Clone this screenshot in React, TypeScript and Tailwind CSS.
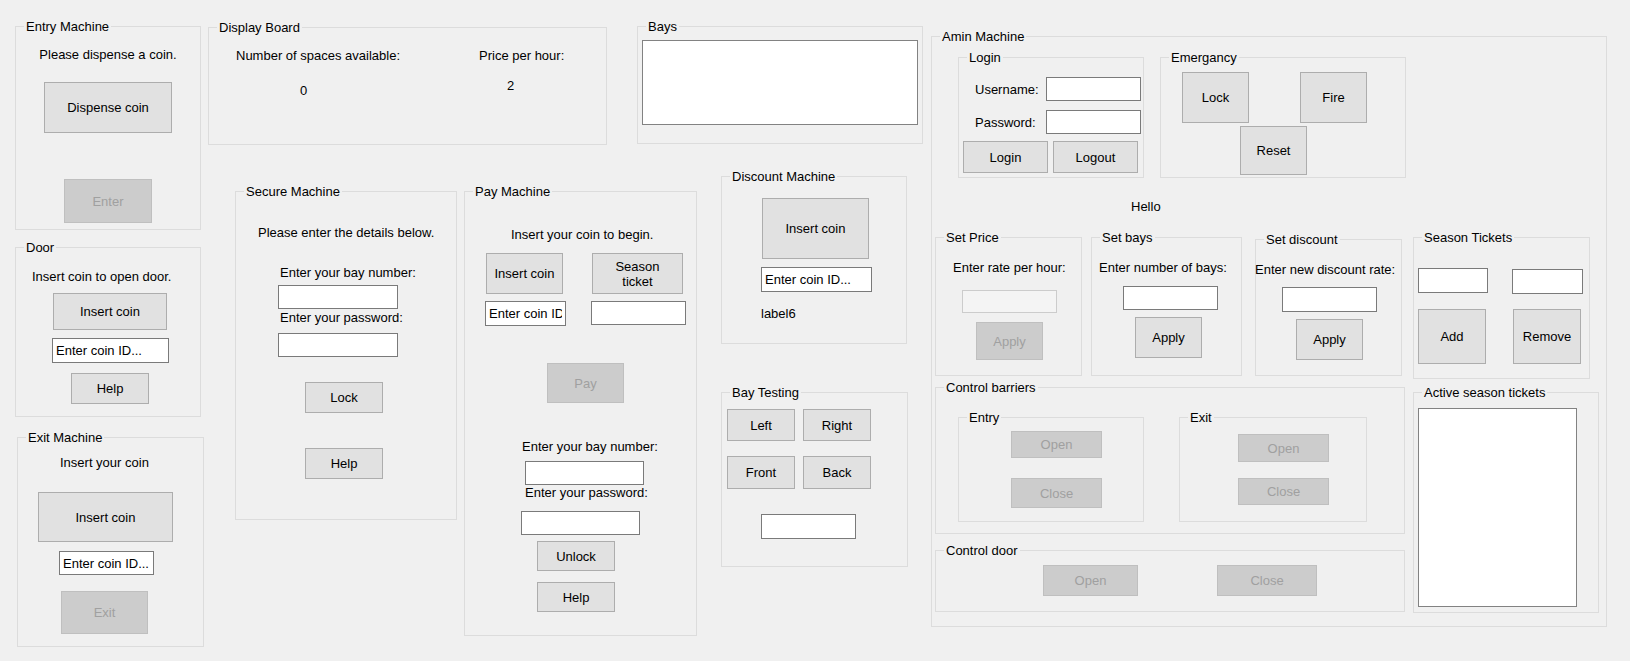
import React from 'react'

type BoxProps = {
  title: string
  className?: string
  children?: React.ReactNode
}

// WinForms-like group box: thin light border with the caption sitting on the top edge
const Group = ({ title, className = '', children }: BoxProps) => (
  <div className={`relative shrink-0 border border-[#dcdcdc] flex flex-col items-start ${className}`}>
    <span className="absolute -top-[8px] left-[8px] px-[2px] bg-[#f0f0f0] whitespace-nowrap leading-[15px]">{title}</span>
    {children}
  </div>
)

const Btn = ({ children, className = '', disabled = false }: { children: React.ReactNode; className?: string; disabled?: boolean }) => (
  <button
    type="button"
    className={`shrink-0 flex items-center justify-center text-center leading-[15px] border ${
      disabled ? 'border-[#bfbfbf] bg-[#cccccc] text-[#a0a0a0]' : 'border-[#adadad] bg-[#e1e1e1] text-black'
    } ${className}`}
  >
    {children}
  </button>
)

const Field = ({ className = '', value = '', disabled = false }: { className?: string; value?: string; disabled?: boolean }) => (
  <input
    readOnly
    value={value}
    className={`shrink-0 block px-[3px] text-black outline-none border ${
      disabled ? 'border-[#cccccc] bg-[#f4f4f4]' : 'border-[#7a7a7a] bg-white'
    } ${className}`}
  />
)

const Label = ({ children, className = '' }: { children: React.ReactNode; className?: string }) => (
  <div className={`shrink-0 whitespace-nowrap leading-[15px] ${className}`}>{children}</div>
)

const ListBox = ({ className = '' }: { className?: string }) => (
  <div className={`shrink-0 bg-white border border-[#828282] ${className}`} />
)

export default function App() {
  return (
    <div className="w-[1630px] h-[661px] overflow-hidden bg-[#f0f0f0] flex items-start text-[13px] leading-[15px] text-black font-['Liberation_Sans',Arial,sans-serif]">
      {/* Left column */}
      <div className="w-[208px] shrink-0 pl-[15px] flex flex-col items-start">
        <Group title="Entry Machine" className="w-[186px] h-[204px] mt-[26px]">
          <Label className="mt-[20px] self-center">Please dispense a coin.</Label>
          <Btn className="mt-[20px] self-center w-[128px] h-[51px]">Dispense coin</Btn>
          <Btn disabled className="mt-[46px] self-center w-[88px] h-[44px]">Enter</Btn>
        </Group>

        <Group title="Door" className="w-[186px] h-[170px] mt-[17px]">
          <Label className="mt-[21px] ml-[16px]">Insert coin to open door.</Label>
          <Btn className="mt-[9px] ml-[37px] w-[114px] h-[37px]">Insert coin</Btn>
          <Field value="Enter coin ID..." className="mt-[8px] ml-[36px] w-[117px] h-[25px]" />
          <Btn className="mt-[10px] ml-[55px] w-[78px] h-[31px]">Help</Btn>
        </Group>

        <Group title="Exit Machine" className="w-[187px] h-[210px] mt-[20px] ml-[2px]">
          <Label className="mt-[17px] ml-[42px]">Insert your coin</Label>
          <Btn className="mt-[22px] ml-[20px] w-[135px] h-[50px]">Insert coin</Btn>
          <Field value="Enter coin ID..." className="mt-[9px] ml-[41px] w-[95px] h-[24px]" />
          <Btn disabled className="mt-[16px] ml-[43px] w-[87px] h-[43px]">Exit</Btn>
        </Group>
      </div>

      {/* Middle area */}
      <div className="shrink-0 flex flex-col">
        <div className="flex items-start">
          <Group title="Display Board" className="w-[399px] h-[118px] mt-[27px]">
            <div className="flex items-start mt-[20px] ml-[27px]">
              <div className="w-[243px] flex flex-col items-start">
                <Label>Number of spaces available:</Label>
                <Label className="mt-[20px] ml-[64px]">0</Label>
              </div>
              <div className="flex flex-col items-start">
                <Label>Price per hour:</Label>
                <Label className="mt-[15px] ml-[28px]">2</Label>
              </div>
            </div>
          </Group>

          <Group title="Bays" className="w-[286px] h-[118px] mt-[26px] ml-[30px]">
            <ListBox className="mt-[13px] ml-[4px] w-[276px] h-[85px]" />
          </Group>
        </div>

        <div className="flex items-start">
          <Group title="Secure Machine" className="w-[222px] h-[329px] mt-[46px] ml-[27px]">
            <Label className="mt-[33px] ml-[22px]">Please enter the details below.</Label>
            <Label className="mt-[25px] ml-[44px]">Enter your bay number:</Label>
            <Field className="mt-[5px] ml-[42px] w-[120px] h-[24px]" />
            <Label className="mt-[1px] ml-[44px]">Enter your password:</Label>
            <Field className="mt-[8px] ml-[42px] w-[120px] h-[24px]" />
            <Btn className="mt-[25px] ml-[69px] w-[78px] h-[31px]">Lock</Btn>
            <Btn className="mt-[35px] ml-[69px] w-[78px] h-[31px]">Help</Btn>
          </Group>

          <Group title="Pay Machine" className="w-[233px] h-[445px] mt-[46px] ml-[7px]">
            <Label className="mt-[35px] ml-[46px]">Insert your coin to begin.</Label>
            <div className="flex items-start mt-[11px] ml-[21px] gap-[29px]">
              <Btn className="w-[77px] h-[41px]">Insert coin</Btn>
              <Btn className="w-[91px] h-[41px]">Season<br />ticket</Btn>
            </div>
            <div className="flex items-start mt-[7px] ml-[20px] gap-[25px]">
              <Field value="Enter coin ID..." className="w-[81px] h-[25px]" />
              <Field className="w-[95px] h-[24px]" />
            </div>
            <Btn disabled className="mt-[37px] ml-[82px] w-[77px] h-[40px]">Pay</Btn>
            <Label className="mt-[36px] ml-[57px]">Enter your bay number:</Label>
            <Field className="mt-[7px] ml-[60px] w-[119px] h-[24px]" />
            <Label className="ml-[60px]">Enter your password:</Label>
            <Field className="mt-[11px] ml-[56px] w-[119px] h-[24px]" />
            <Btn className="mt-[6px] ml-[72px] w-[78px] h-[30px]">Unlock</Btn>
            <Btn className="mt-[11px] ml-[72px] w-[78px] h-[30px]">Help</Btn>
          </Group>

          <div className="flex flex-col items-start ml-[24px] mt-[31px]">
            <Group title="Discount Machine" className="w-[186px] h-[168px]">
              <Btn className="mt-[21px] ml-[40px] w-[107px] h-[61px]">Insert coin</Btn>
              <Field value="Enter coin ID..." className="mt-[8px] ml-[39px] w-[111px] h-[25px]" />
              <Label className="mt-[14px] ml-[39px]">label6</Label>
            </Group>

            <Group title="Bay Testing" className="w-[187px] h-[175px] mt-[48px]">
              <div className="flex mt-[16px] ml-[5px] gap-[8px]">
                <Btn className="w-[68px] h-[32px]">Left</Btn>
                <Btn className="w-[68px] h-[32px]">Right</Btn>
              </div>
              <div className="flex mt-[15px] ml-[5px] gap-[8px]">
                <Btn className="w-[68px] h-[33px]">Front</Btn>
                <Btn className="w-[68px] h-[33px]">Back</Btn>
              </div>
              <Field className="mt-[25px] ml-[39px] w-[95px] h-[25px]" />
            </Group>
          </div>
        </div>
      </div>

      {/* Admin machine */}
      <Group title="Amin Machine" className="w-[676px] h-[591px] mt-[36px] ml-[8px]">
        <div className="flex items-start mt-[20px] ml-[26px] gap-[16px]">
          <Group title="Login" className="w-[186px] h-[121px]">
            <div className="flex items-center mt-[19px] ml-[16px]">
              <Label className="w-[71px]">Username:</Label>
              <Field className="w-[95px] h-[24px]" />
            </div>
            <div className="flex items-center mt-[9px] ml-[16px]">
              <Label className="w-[71px]">Password:</Label>
              <Field className="w-[95px] h-[24px]" />
            </div>
            <div className="flex mt-[7px] ml-[4px] gap-[5px]">
              <Btn className="w-[85px] h-[32px]">Login</Btn>
              <Btn className="w-[85px] h-[32px]">Logout</Btn>
            </div>
          </Group>

          <Group title="Emergancy" className="w-[246px] h-[121px]">
            <div className="flex mt-[14px] ml-[21px] gap-[51px]">
              <Btn className="w-[67px] h-[51px]">Lock</Btn>
              <Btn className="w-[67px] h-[51px]">Fire</Btn>
            </div>
            <Btn className="mt-[3px] ml-[79px] w-[67px] h-[49px]">Reset</Btn>
          </Group>
        </div>

        <Label className="mt-[21px] ml-[199px]">Hello</Label>

        <div className="flex items-start mt-[23px] ml-[3px]">
          <Group title="Set Price" className="w-[147px] h-[139px]">
            <Label className="mt-[22px] ml-[17px]">Enter rate per hour:</Label>
            <Field disabled className="mt-[15px] ml-[26px] w-[95px] h-[23px]" />
            <Btn disabled className="mt-[9px] ml-[40px] w-[67px] h-[38px]">Apply</Btn>
          </Group>

          <Group title="Set bays" className="w-[151px] h-[139px] ml-[9px]">
            <Label className="mt-[22px] ml-[7px]">Enter number of bays:</Label>
            <Field className="mt-[11px] ml-[31px] w-[95px] h-[24px]" />
            <Btn className="mt-[7px] ml-[43px] w-[67px] h-[41px]">Apply</Btn>
          </Group>

          <Group title="Set discount" className="w-[147px] h-[137px] ml-[13px] mt-[2px]">
            <Label className="mt-[22px] -ml-[1px]">Enter new discount rate:</Label>
            <Field className="mt-[10px] ml-[26px] w-[95px] h-[25px]" />
            <Btn className="mt-[7px] ml-[40px] w-[67px] h-[41px]">Apply</Btn>
          </Group>

          <Group title="Season Tickets" className="w-[177px] h-[142px] ml-[11px]">
            <div className="flex items-start mt-[30px] ml-[4px] gap-[24px]">
              <Field className="w-[70px] h-[25px]" />
              <Field className="w-[71px] h-[25px] mt-[1px]" />
            </div>
            <div className="flex mt-[15px] ml-[4px] gap-[27px]">
              <Btn className="w-[68px] h-[55px]">Add</Btn>
              <Btn className="w-[68px] h-[55px]">Remove</Btn>
            </div>
          </Group>
        </div>

        <div className="flex items-start ml-[3px]">
          <div className="flex flex-col items-start">
            <Group title="Control barriers" className="w-[470px] h-[147px] mt-[8px]">
              <div className="flex items-start mt-[29px] ml-[22px] gap-[35px]">
                <Group title="Entry" className="w-[186px] h-[105px]">
                  <Btn disabled className="mt-[13px] ml-[52px] w-[91px] h-[27px]">Open</Btn>
                  <Btn disabled className="mt-[20px] ml-[52px] w-[91px] h-[30px]">Close</Btn>
                </Group>
                <Group title="Exit" className="w-[188px] h-[105px]">
                  <Btn disabled className="mt-[16px] ml-[58px] w-[91px] h-[28px]">Open</Btn>
                  <Btn disabled className="mt-[16px] ml-[58px] w-[91px] h-[27px]">Close</Btn>
                </Group>
              </div>
            </Group>

            <Group title="Control door" className="w-[470px] h-[62px] mt-[16px]">
              <div className="flex mt-[14px] ml-[107px] gap-[79px]">
                <Btn disabled className="w-[95px] h-[31px]">Open</Btn>
                <Btn disabled className="w-[100px] h-[31px]">Close</Btn>
              </div>
            </Group>
          </div>

          <Group title="Active season tickets" className="w-[186px] h-[221px] mt-[13px] ml-[8px]">
            <ListBox className="mt-[15px] ml-[4px] w-[159px] h-[199px]" />
          </Group>
        </div>
      </Group>
    </div>
  )
}
